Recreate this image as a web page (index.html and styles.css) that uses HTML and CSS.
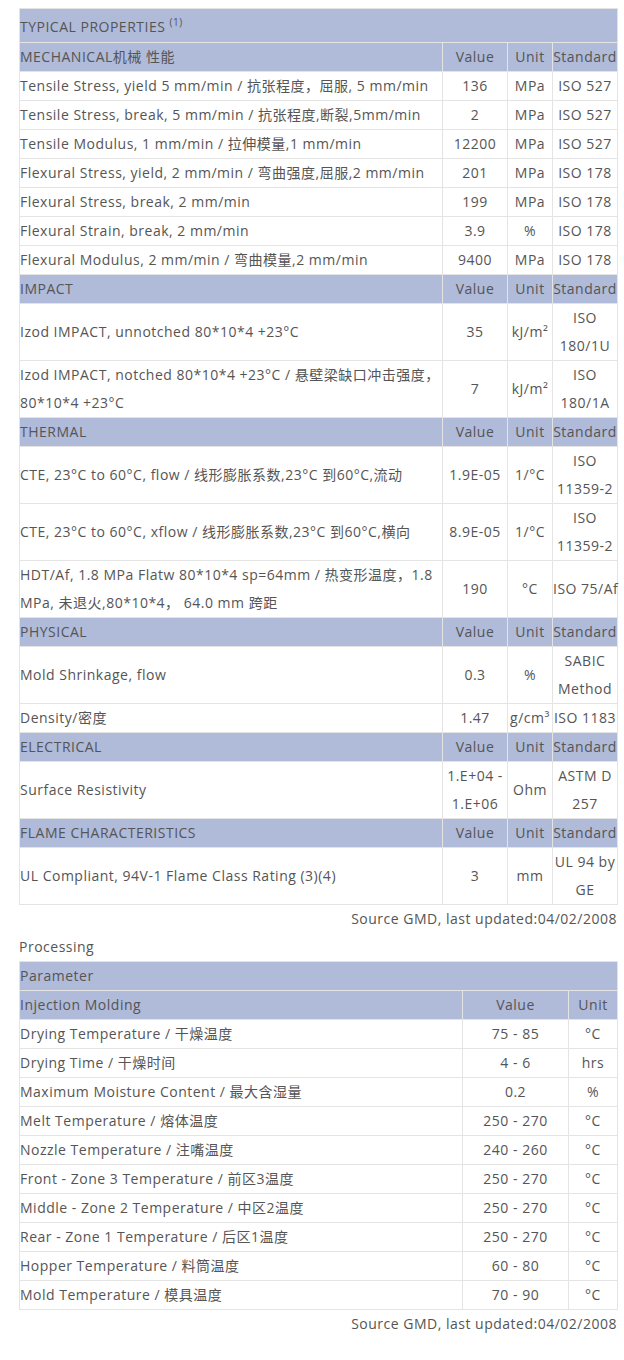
FILE: index.html
```html
<!DOCTYPE html>
<html lang="zh">
<head>
<meta charset="utf-8">
<title>Typical Properties</title>
<link rel="stylesheet" href="styles.css">
</head>
<body>
<div class="page">
  <table class="props">
    <colgroup>
      <col class="c-name">
      <col class="c-val">
      <col class="c-unit">
      <col class="c-std">
    </colgroup>
    <tr class="head title"><td colspan="4">TYPICAL PROPERTIES <sup>(1)</sup></td></tr>
    <tr class="head"><td>MECHANICAL机械 性能</td><td>Value</td><td>Unit</td><td>Standard</td></tr>
    <tr><td>Tensile Stress, yield 5 mm/min / 抗张程度，屈服, 5 mm/min</td><td>136</td><td>MPa</td><td>ISO 527</td></tr>
    <tr><td>Tensile Stress, break, 5 mm/min / 抗张程度,断裂,5mm/min</td><td>2</td><td>MPa</td><td>ISO 527</td></tr>
    <tr><td>Tensile Modulus, 1 mm/min / 拉伸模量,1 mm/min</td><td>12200</td><td>MPa</td><td>ISO 527</td></tr>
    <tr><td>Flexural Stress, yield, 2 mm/min / 弯曲强度,屈服,2 mm/min</td><td>201</td><td>MPa</td><td>ISO 178</td></tr>
    <tr><td>Flexural Stress, break, 2 mm/min</td><td>199</td><td>MPa</td><td>ISO 178</td></tr>
    <tr><td>Flexural Strain, break, 2 mm/min</td><td>3.9</td><td>%</td><td>ISO 178</td></tr>
    <tr><td>Flexural Modulus, 2 mm/min / 弯曲模量,2 mm/min</td><td>9400</td><td>MPa</td><td>ISO 178</td></tr>
    <tr class="head"><td>IMPACT</td><td>Value</td><td>Unit</td><td>Standard</td></tr>
    <tr><td>Izod IMPACT, unnotched 80*10*4 +23°C</td><td>35</td><td>kJ/m²</td><td>ISO<br>180/1U</td></tr>
    <tr><td>Izod IMPACT, notched 80*10*4 +23°C / 悬壁梁缺口冲击强度，<br>80*10*4 +23°C</td><td>7</td><td>kJ/m²</td><td>ISO<br>180/1A</td></tr>
    <tr class="head"><td>THERMAL</td><td>Value</td><td>Unit</td><td>Standard</td></tr>
    <tr><td>CTE, 23°C to 60°C, flow / 线形膨胀系数,23°C 到60°C,流动</td><td>1.9E-05</td><td>1/°C</td><td>ISO<br>11359-2</td></tr>
    <tr><td>CTE, 23°C to 60°C, xflow / 线形膨胀系数,23°C 到60°C,横向</td><td>8.9E-05</td><td>1/°C</td><td>ISO<br>11359-2</td></tr>
    <tr><td>HDT/Af, 1.8 MPa Flatw 80*10*4 sp=64mm / 热变形温度，1.8<br>MPa, 未退火,80*10*4，  64.0 mm 跨距</td><td>190</td><td>°C</td><td>ISO 75/Af</td></tr>
    <tr class="head"><td>PHYSICAL</td><td>Value</td><td>Unit</td><td>Standard</td></tr>
    <tr><td>Mold Shrinkage, flow</td><td>0.3</td><td>%</td><td>SABIC<br>Method</td></tr>
    <tr><td>Density/密度</td><td>1.47</td><td>g/cm³</td><td>ISO 1183</td></tr>
    <tr class="head"><td>ELECTRICAL</td><td>Value</td><td>Unit</td><td>Standard</td></tr>
    <tr><td>Surface Resistivity</td><td>1.E+04 -<br>1.E+06</td><td>Ohm</td><td>ASTM D<br>257</td></tr>
    <tr class="head"><td>FLAME CHARACTERISTICS</td><td>Value</td><td>Unit</td><td>Standard</td></tr>
    <tr><td>UL Compliant, 94V-1 Flame Class Rating (3)(4)</td><td>3</td><td>mm</td><td>UL 94 by<br>GE</td></tr>
  </table>
  <p class="source">Source GMD, last updated:04/02/2008</p>

  <p class="section">Processing</p>
  <table class="proc">
    <colgroup>
      <col class="p-name">
      <col class="p-val">
      <col class="p-unit">
    </colgroup>
    <tr class="head"><td colspan="3">Parameter</td></tr>
    <tr class="head"><td>Injection Molding</td><td>Value</td><td>Unit</td></tr>
    <tr><td>Drying Temperature / 干燥温度</td><td>75 - 85</td><td>°C</td></tr>
    <tr><td>Drying Time / 干燥时间</td><td>4 - 6</td><td>hrs</td></tr>
    <tr><td>Maximum Moisture Content / 最大含湿量</td><td>0.2</td><td>%</td></tr>
    <tr><td>Melt Temperature / 熔体温度</td><td>250 - 270</td><td>°C</td></tr>
    <tr><td>Nozzle Temperature / 注嘴温度</td><td>240 - 260</td><td>°C</td></tr>
    <tr><td>Front - Zone 3 Temperature / 前区3温度</td><td>250 - 270</td><td>°C</td></tr>
    <tr><td>Middle - Zone 2 Temperature / 中区2温度</td><td>250 - 270</td><td>°C</td></tr>
    <tr><td>Rear - Zone 1 Temperature / 后区1温度</td><td>250 - 270</td><td>°C</td></tr>
    <tr><td>Hopper Temperature / 料筒温度</td><td>60 - 80</td><td>°C</td></tr>
    <tr><td>Mold Temperature / 模具温度</td><td>70 - 90</td><td>°C</td></tr>
  </table>
  <p class="source">Source GMD, last updated:04/02/2008</p>
</div>
</body>
</html>
```

FILE: styles.css
```css
html, body {
  margin: 0;
  padding: 0;
  background: #ffffff;
}

body {
  padding: 8px 8px 8px 19px;
  font-family: "Open Sans", "Noto Sans CJK SC", sans-serif;
  font-size: 14px;
  letter-spacing: 0.5px;
  color: #555555;
}

.page {
  width: 598px;
}

table {
  width: 598px;
  border-collapse: collapse;
  table-layout: fixed;
  border: 1px solid #333333;
}

td {
  border: 1px solid #e4e4e4;
  padding: 0;
  line-height: 28px;
  text-align: center;
  vertical-align: middle;
  white-space: nowrap;
  overflow: visible;
}

td:first-child {
  text-align: left;
}

tr.head td {
  background: #b0bad9;
}

tr.title td {
  height: 33px;
  padding-top: 3px;
  line-height: 30px;
  box-sizing: border-box;
}

sup {
  font-size: 10px;
  line-height: 0;
  vertical-align: 6px;
}

.c-name { width: 423px; }
.c-val { width: 65px; }
.c-unit { width: 45px; }
.c-std { width: 65px; }

.p-name { width: 443px; }
.p-val { width: 106px; }
.p-unit { width: 49px; }

.source {
  margin: 0;
  text-align: right;
  line-height: 28px;
}

.section {
  margin: 0;
  line-height: 28px;
}
```
